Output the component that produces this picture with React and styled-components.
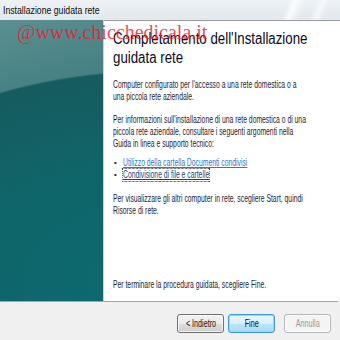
import React from 'react';
import styled, { createGlobalStyle } from 'styled-components';

const GlobalStyle = createGlobalStyle`
  html, body {
    margin: 0;
    padding: 0;
    background: #f0f0f0;
  }
  body {
    width: 340px;
    height: 340px;
    overflow: hidden;
    font-family: "Liberation Sans", Arial, sans-serif;
  }
`;

export default function App() {
  return (
    <Window>
      <GlobalStyle />
      <TitleBar>
        <TitleText>Installazione guidata rete</TitleText>
      </TitleBar>

      <Body>
        <SidePanel />
        <Content>
          <Heading>
            Completamento dell'Installazione<br />guidata rete
          </Heading>
          <Para $top={12}>
            Computer configurato per l'accesso a una rete domestica o a<br />
            una piccola rete aziendale.
          </Para>
          <Para $top={11}>
            Per informazioni sull'installazione di una rete domestica o di una<br />
            piccola rete aziendale, consultare i seguenti argomenti nella<br />
            Guida in linea e supporto tecnico:
          </Para>
          <LinkList>
            <LinkItem>
              <Bullet>•</Bullet>
              <Link href="#">Utilizzo della cartella Documenti condivisi</Link>
            </LinkItem>
            <LinkItem>
              <Bullet>•</Bullet>
              <Link href="#" $focused>Condivisione di file e cartelle</Link>
            </LinkItem>
          </LinkList>
          <Para $top={12}>
            Per visualizzare gli altri computer in rete, scegliere Start, quindi<br />
            Risorse di rete.
          </Para>
          <Para $last>Per terminare la procedura guidata, scegliere Fine.</Para>
        </Content>
      </Body>

      <Footer>
        <Button>
          <ButtonLabel>&lt; Indietro</ButtonLabel>
        </Button>
        <Button $default $gap={4}>
          <ButtonLabel>Fine</ButtonLabel>
        </Button>
        <Button disabled $gap={9}>
          <ButtonLabel>Annulla</ButtonLabel>
        </Button>
      </Footer>

      <Watermark>@www.chicchedicala.it</Watermark>
    </Window>
  );
}

const Window = styled.div`
  position: relative;
  width: 340px;
  height: 340px;
  display: flex;
  flex-direction: column;
  background: #f0f0f0;
  overflow: hidden;
`;

const TitleBar = styled.div`
  flex: none;
  height: 20px;
  display: flex;
  align-items: center;
  padding-left: 3px;
  background:
    linear-gradient(112deg, transparent 83%, rgba(255, 255, 255, 0.75) 85%, transparent 88%,
      transparent 91%, rgba(255, 255, 255, 0.6) 93%, transparent 95%),
    linear-gradient(180deg, #eef2f5 0%, #e2e8ed 100%);
`;

const TitleText = styled.span`
  display: inline-block;
  font-size: 11px;
  color: #0c0c0c;
  white-space: nowrap;
  transform: scaleX(0.79);
  transform-origin: left center;
`;

const Body = styled.div`
  flex: none;
  display: flex;
  height: 281px;
  margin-right: 2px;
  border-bottom: 1px solid #a4a4a4;
`;

const SidePanel = styled.div`
  flex: none;
  width: 103px;
  border-right: 1px solid #cdd2d5;
  background:
    radial-gradient(ellipse 360px 210px at 160px 260px,
      #0c6b71 0%, #0f6569 55%, #165b5f 99%, rgba(22, 91, 95, 0) 100%),
    linear-gradient(165deg, #5b8f91 0%, #3e7b7d 35%, #2a6c6f 70%, #206467 100%);
`;

const Content = styled.div`
  flex: 1;
  display: flex;
  flex-direction: column;
  background: #ffffff;
  border-top: 1px solid #9c9c9c;
  border-right: 1px solid #858585;
  padding: 8px 0 10px 9px;
  color: #1c1c38;
`;

const Heading = styled.div`
  display: inline-block;
  font-size: 16px;
  line-height: 19px;
  color: #0a0a26;
  white-space: nowrap;
  transform: scaleX(0.83);
  transform-origin: left top;
`;

const Para = styled.div`
  margin-top: ${p => (p.$last ? 'auto' : `${p.$top}px`)};
  font-size: 10px;
  line-height: 12px;
  white-space: nowrap;
  transform: scaleX(0.68);
  transform-origin: left top;
`;

const LinkList = styled.ul`
  list-style: none;
  margin: 7px 0 0;
  padding: 0;
`;

const LinkItem = styled.li`
  display: flex;
  align-items: center;
  height: 12px;
  font-size: 10px;
  line-height: 12px;
`;

const Bullet = styled.span`
  flex: none;
  width: 9px;
  padding-left: 1px;
  font-size: 8px;
  color: #222;
`;

const Link = styled.a`
  display: inline-block;
  white-space: nowrap;
  color: ${p => (p.$focused ? '#203f88' : '#2a7ad4')};
  text-decoration: underline;
  outline: ${p => (p.$focused ? '1px dotted #333' : 'none')};
  transform: scaleX(0.68);
  transform-origin: left center;
`;

const Footer = styled.div`
  flex: 1;
  display: flex;
  justify-content: flex-end;
  align-items: flex-start;
  padding: 12px 9px 0 0;
`;

const Button = styled.button`
  width: 47px;
  height: 19px;
  margin-left: ${p => p.$gap || 0}px;
  padding: 0;
  display: flex;
  align-items: center;
  justify-content: center;
  border-radius: 3px;
  border: 1px solid ${p => (p.$default ? '#3c9ad6' : p.disabled ? '#b4b8bb' : '#707070')};
  background: ${p =>
    p.disabled
      ? '#f4f4f4'
      : p.$default
      ? 'linear-gradient(180deg, #eaf6fd 0%, #d9f0fc 50%, #bee6fd 51%, #a7d9f5 100%)'
      : 'linear-gradient(180deg, #f2f2f2 0%, #ebebeb 50%, #dddddd 51%, #cfcfcf 100%)'};
  box-shadow: ${p => (p.$default ? 'inset 0 0 0 1px #9ad6f7' : 'inset 0 0 0 1px rgba(255,255,255,0.7)')};
  color: ${p => (p.disabled ? '#9a9a9a' : '#111')};
  font-family: "Liberation Sans", Arial, sans-serif;
  font-size: 10px;
`;

const ButtonLabel = styled.span`
  display: inline-block;
  white-space: nowrap;
  transform: scaleX(0.72);
`;

const Watermark = styled.div`
  position: absolute;
  left: 17px;
  top: 22px;
  font-family: "Liberation Serif", "Times New Roman", serif;
  font-size: 20px;
  line-height: 20px;
  color: rgba(232, 30, 45, 0.82);
  white-space: nowrap;
  pointer-events: none;
`;
